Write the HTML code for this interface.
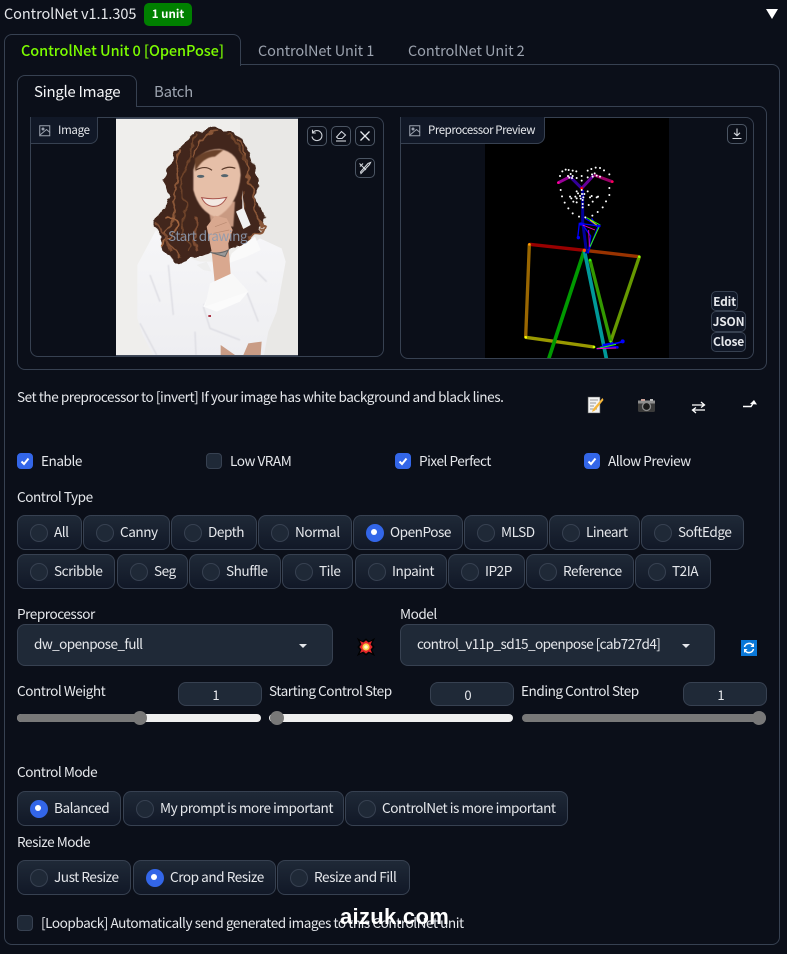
<!DOCTYPE html>
<html><head><meta charset="utf-8"><style>
*{box-sizing:border-box}
html,body{margin:0;padding:0;background:#0b0f19}
body{width:787px;height:954px;position:relative;overflow:hidden;font-family:"Noto Sans CJK JP","Liberation Sans",sans-serif;font-size:13.6px;color:#e5e7eb}
.a{position:absolute;white-space:nowrap}
.b{position:absolute;border:1px solid #374151}
.t{position:absolute;white-space:nowrap;line-height:20px;height:20px;letter-spacing:-.47px;margin-top:-1px}
.r{position:absolute;height:35px;border:1px solid #374151;border-radius:8px;background:linear-gradient(to bottom,#1f2937,#111827);line-height:31px;white-space:nowrap;padding-left:36px;color:#e5e7eb;letter-spacing:-.47px}
.r:before{content:"";position:absolute;left:12px;top:8px;width:16px;height:16px;border-radius:50%;background:#1f2937;border:1px solid #374151}
.r.on:before{background:#3366e8;border-color:#3366e8}
.r.on:after{content:"";position:absolute;left:17px;top:13px;width:6px;height:6px;border-radius:50%;background:#fff}
.c{position:absolute;width:16px;height:16px;border-radius:4px;background:#1f2937;border:1px solid #374151}
.c.on{background:#3366e8;border-color:#3366e8}
.c.on svg{position:absolute;left:1px;top:1px}
.ib{position:absolute;width:20px;height:20px;border:1px solid #4b5563;border-radius:5px;background:#0b0f19}
.ib svg{position:absolute;left:2px;top:2px}
.sb{position:absolute;border:1px solid #374151;border-radius:5px;background:#111827;color:#e5e7eb;font-weight:700;font-size:12px;text-align:center;line-height:18px;height:20px;letter-spacing:-.2px}
.sel{position:absolute;height:42px;top:624px;background:#1f2937;border:1px solid #374151;border-radius:8px;line-height:37px;padding-left:16px;letter-spacing:-.6px}
.ar{position:absolute;width:0;height:0;border-left:4px solid transparent;border-right:4px solid transparent;border-top:4px solid #e5e7eb;top:19px}
.num{position:absolute;top:682px;width:84px;height:24px;background:#1f2937;border:1px solid #374151;border-radius:8px;text-align:center;line-height:24px;font-size:13px;padding-right:8px}
.tr{position:absolute;top:714px;height:8px;border-radius:4px;background:#f0f0f0}
.fi{position:absolute;top:714px;height:8px;border-radius:4px;background:#787878}
.kn{position:absolute;top:711px;width:14px;height:14px;border-radius:50%;background:#787878}
</style></head><body>

<div class="t" style="left:4px;top:5px;font-size:14.5px;letter-spacing:-.07px">ControlNet v1.1.305</div>
<div class="a" style="left:144px;top:3px;width:48px;height:23px;background:#008000;border-radius:5px;color:#fff;font-weight:700;font-size:11.5px;text-align:center;line-height:23px">1 unit</div>
<svg class="a" style="left:765px;top:8px" width="14" height="12"><path d="M1 1H13L7 11Z" fill="#fff"/></svg>

<!-- outer panel -->
<div class="b" style="left:4px;top:64px;width:776px;height:881px;border-radius:0 8px 8px 8px"></div>
<div class="a" style="left:4px;top:34px;width:237px;height:32px;border:1px solid #374151;border-bottom:0;border-radius:8px 8px 0 0;background:#0b0f19"></div>
<div class="t" style="left:21px;top:42px;color:#7cfc00;font-weight:500;font-size:14.5px;letter-spacing:-.07px">ControlNet Unit 0 [OpenPose]</div>
<div class="t" style="left:258px;top:42px;color:#9ca3af;font-size:14.5px;letter-spacing:-.1px">ControlNet Unit 1</div>
<div class="t" style="left:408px;top:42px;color:#9ca3af;font-size:14.5px;letter-spacing:-.07px">ControlNet Unit 2</div>

<!-- inner panel -->
<div class="b" style="left:17px;top:106px;width:750px;height:264px;border-radius:0 8px 8px 8px"></div>
<div class="a" style="left:17px;top:75px;width:120px;height:32px;border:1px solid #374151;border-bottom:0;border-radius:8px 8px 0 0;background:#0b0f19"></div>
<div class="t" style="left:34px;top:83px;font-size:15px;letter-spacing:-.3px;color:#f3f4f6">Single Image</div>
<div class="t" style="left:154px;top:83px;font-size:15px;letter-spacing:-.25px;color:#9ca3af">Batch</div>

<!-- image box -->
<div class="b" style="left:30px;top:117px;width:354px;height:240px;border-radius:8px;overflow:hidden"></div>
<svg class="a" style="left:0;top:0" width="787" height="954" viewBox="0 0 787 954">
<defs>
<filter id="bl" x="-20%" y="-20%" width="140%" height="140%"><feGaussianBlur stdDeviation="1.2"/></filter>
<filter id="bs" x="-20%" y="-20%" width="140%" height="140%"><feGaussianBlur stdDeviation="0.5"/></filter>
<filter id="cu" x="-20%" y="-20%" width="140%" height="140%"><feTurbulence type="fractalNoise" baseFrequency=".035" numOctaves="2" seed="4" result="n"/><feDisplacementMap in="SourceGraphic" in2="n" scale="28" xChannelSelector="R" yChannelSelector="G"/><feGaussianBlur stdDeviation=".5"/></filter>
<clipPath id="pc"><rect x="116" y="119" width="182" height="236"/></clipPath>
<clipPath id="ck"><rect x="485" y="118" width="184" height="240"/></clipPath>
<linearGradient id="sh" x1="0" y1="0" x2="0" y2="1"><stop offset="0" stop-color="#f6f6f8"/><stop offset="1" stop-color="#eeeef1"/></linearGradient>
</defs>
<rect x="116" y="118" width="182" height="238" fill="#414a5a"/>
<g clip-path="url(#pc)"><rect x="116" y="119" width="182" height="236" fill="#efeeec"/>
<rect x="240" y="119" width="58" height="236" fill="#e9e8e6"/>
<g transform="translate(100,115) scale(.33333)">
<!-- shirt -->
<path filter="url(#bs)" d="M168 345L112 450L112 610L128 660L165 730H490L505 650L530 590L557 440L545 400L480 370L440 400L380 440L300 440L210 410Z" fill="url(#sh)"/>
<path filter="url(#bl)" d="M120 625L170 720M285 650L288 720M310 570L440 530M310 575L330 640L420 675M205 450L220 600M440 530L475 620M500 500L470 470M150 480L180 560" stroke="#dcdce2" stroke-width="4" fill="none"/>
<path filter="url(#bs)" d="M310 575L340 510L400 480L445 530L420 560L350 590Z" fill="#fbfbfb"/>
<path d="M362 690L405 720H362Z M445 685L485 680L482 720H430Z" fill="#c99c85" filter="url(#bs)"/>
<!-- hair -->
<g filter="url(#cu)">
<path d="M345 38L405 50L440 90L458 150L475 200L470 250L495 310L478 350L440 372L425 392L330 412L240 445L195 415L178 350L158 315L195 280L205 245L192 190L225 110L280 55Z" fill="#43281b"/>
<g fill="none" stroke-width="6">
<path d="M240 100C215 150 250 180 225 225S250 290 210 330S225 400 240 425" stroke="#8a5637"/>
<path d="M290 60C260 100 270 140 250 180S275 260 250 320S290 380 270 410" stroke="#6d4229"/>
<path d="M350 50C310 60 290 90 275 130" stroke="#8a5637"/>
<path d="M410 70C450 110 430 170 455 210S450 290 480 320S460 360 440 370" stroke="#8a5637"/>
<path d="M380 55C420 80 410 110 440 140" stroke="#6d4229"/>
<path d="M195 310C220 290 240 320 225 350S190 360 190 395" stroke="#a0653f"/>
<path d="M170 320C190 340 200 370 210 410" stroke="#7c4b30"/>
<path d="M430 230C420 270 445 300 430 340" stroke="#6d4229"/>
<path d="M285 300C300 340 270 370 290 400" stroke="#7c4b30"/>
</g></g>
<!-- neck / face -->
<path filter="url(#bl)" d="M322 260L405 260L400 335L335 335Z" fill="#c99a82"/>
<path filter="url(#bl)" d="M280 165Q295 102 358 102Q418 110 422 180Q416 270 350 307Q298 292 280 225Z" fill="#e6bfa8"/>
<path filter="url(#bl)" d="M285 130Q320 100 370 105L345 125Q310 125 285 170Z" fill="#6b432c"/>
<path d="M288 165Q316 150 336 166M365 164Q385 152 406 160" stroke="#5a3a2a" stroke-width="3.500" fill="none"/>
<ellipse cx="302" cy="184" rx="11" ry="4.500" fill="#55656e"/><ellipse cx="374" cy="182" rx="11" ry="4.500" fill="#55656e"/>
<path d="M305 248Q340 255 380 247Q365 276 338 274Q316 272 305 248Z" fill="#f3e9e3" stroke="#a8554d" stroke-width="3"/>
<!-- earring -->
<path d="M427 225L427 280L408 290L430 342L452 330L432 280" fill="#f1f1f1" filter="url(#bs)"/>
<!-- collar -->
<path filter="url(#bs)" d="M420 395L465 365L482 405L440 425L385 445L395 415Z" fill="#fafafa"/>
<path filter="url(#bs)" d="M290 450L320 440L335 470L310 465Z" fill="#eee"/>
<!-- hand + wrist -->
<path filter="url(#bs)" d="M320 335L345 302L380 310L398 345L385 385L392 480L345 512L335 410Z" fill="#d9a88f"/>
<path d="M345 335L380 322M340 355L388 345" stroke="#b98a72" stroke-width="2" fill="none"/>
<path d="M330 412Q360 418 385 405L375 425Z" stroke="#666" stroke-width="3" fill="#999"/>
<path d="M330 505L395 475L445 530L315 575Z" fill="#f8f8f8" filter="url(#bs)"/>
<path d="M325 600h8v6h-8z" fill="#a34"/>
</g></g>

<!-- preview black image -->
<rect x="485" y="118" width="184" height="240" fill="#000"/>
<g clip-path="url(#ck)"><g transform="translate(400,110) scale(.33333)" fill="none" stroke-linecap="butt">
<path d="M388 403L553 421" stroke="#990000" stroke-width="10"/>
<path d="M553 421L718 440" stroke="#993300" stroke-width="10"/>
<path d="M388 403L377 682" stroke="#996600" stroke-width="10"/>
<path d="M377 682L582 711" stroke="#999900" stroke-width="10"/>
<path d="M718 440L632 695" stroke="#669900" stroke-width="10"/>
<path d="M570 450L632 695" stroke="#339900" stroke-width="10"/>
<path d="M553 421L445 750" stroke="#009900" stroke-width="11"/>
<path d="M553 421L620 750" stroke="#009999" stroke-width="11"/>
<path d="M548 240L548 335L560 430" stroke="#000099" stroke-width="9"/>
<path d="M545 235L510 200" stroke="#330099" stroke-width="9"/>
<path d="M510 200L475 218" stroke="#990099" stroke-width="9"/>
<path d="M545 235L582 195" stroke="#660099" stroke-width="9"/>
<path d="M582 195L637 215" stroke="#990066" stroke-width="9"/>
<path d="M555 325L595 348L563 430M545 340L572 378L565 430M575 325L590 350M533 385L538 340L598 348" stroke="#0000ff" stroke-width="4"/>
<path d="M560 323L600 345L570 410" stroke="#33ff00" stroke-width="3"/>
<path d="M548 345L585 360M566 360L568 410" stroke="#ff00cc" stroke-width="2.500"/>
<path d="M570 330L590 345" stroke="#ffcc00" stroke-width="3"/>
<path d="M590 716L650 710M600 712L668 695M610 705L640 698" stroke="#0000ff" stroke-width="5"/>
<path d="M590 716L648 703" stroke="#33ff00" stroke-width="3"/>
<path d="M590 716L650 714" stroke="#ff00cc" stroke-width="3"/>
<circle cx="388" cy="403" r="4" fill="#ff9900"/>
<circle cx="553" cy="421" r="5" fill="#ff5500"/><circle cx="718" cy="440" r="4" fill="#99ff00"/>
<circle cx="377" cy="682" r="4" fill="#ffff00"/><circle cx="582" cy="711" r="4" fill="#ccff00"/><circle cx="570" cy="450" r="4" fill="#33ff00"/><circle cx="632" cy="695" r="3" fill="#66ff00"/>
<circle cx="545" cy="235" r="4" fill="#ff0000"/><circle cx="475" cy="218" r="4" fill="#ff0099"/><circle cx="637" cy="215" r="4" fill="#ff0055"/>
<circle cx="668" cy="694" r="6" fill="#0000ff"/><circle cx="652" cy="712" r="4" fill="#0000ff"/><circle cx="612" cy="705" r="4" fill="#0000ff"/><circle cx="535" cy="383" r="5" fill="#0000ff"/><circle cx="598" cy="348" r="4" fill="#0000ff"/><circle cx="543" cy="342" r="5" fill="#0000ff"/>
<path stroke="#fff" stroke-width="6" stroke-linecap="round" d="M480 198h.1M487 184h.1M497 179h.1M506 180h.1M518 182h.1M529 184h.1M504 198h.1M512 192h.1M518 198h.1M508 203h.1M516 204h.1M530 204h.1M545 198h.1M545 212h.1M563 182h.1M574 177h.1M587 173h.1M600 174h.1M612 181h.1M628 193h.1M563 202h.1M576 193h.1M584 190h.1M590 197h.1M578 200h.1M600 200h.1M482 240h.1M628 234h.1M486 259h.1M628 255h.1M494 278h.1M618 274h.1M505 295h.1M608 292h.1M518 310h.1M593 306h.1M537 320h.1M577 317h.1M556 322h.1M530 244h.1M545 240h.1M563 244h.1M534 250h.1M553 252h.1M510 260h.1M514 265h.1M526 260h.1M530 265h.1M540 258h.1M546 252h.1M550 262h.1M542 266h.1M570 262h.1M575 258h.1M590 262h.1M594 260h.1M520 275h.1M530 277h.1M548 270h.1M548 282h.1M548 292h.1M566 285h.1M578 275h.1"/>
</g></g>

<!-- memo -->
<g transform="translate(587,397)">
<path d="M1 0H13V16H1Z" fill="#f4f4f4" stroke="#555" stroke-width=".6"/>
<path d="M3 3H11M3 6H9M3 9H7M3 12H10" stroke="#9a9a9a" stroke-width="1"/>
<path d="M15.500 1L6 12L5 15L8 13.500L16.500 3Z" fill="#f6b73c"/>
</g>
<!-- camera -->
<g transform="translate(638,398)">
<rect x="0" y="2.500" width="17" height="11.500" rx="1.500" fill="#3a3a3a"/>
<rect x="0" y="2.500" width="17" height="3" fill="#8f8f8f"/>
<rect x="3" y="1" width="4" height="2" fill="#c9a39a"/><rect x="12" y="1" width="3" height="2" fill="#bbb"/>
<circle cx="8.500" cy="8.500" r="4" fill="#1a1a1a" stroke="#8a8a8a" stroke-width="1.300"/>
</g>
<!-- swap -->
<g transform="translate(692,401)" stroke="#fff" stroke-width="1.300" fill="none">
<path d="M0 4H12M9 1L12.500 4L9 6.500"/><path d="M13 9H1M4 6.500L.5 9L4 12"/>
</g>
<!-- return -->
<path d="M743 406.500H751L754 402" stroke="#fff" stroke-width="1.400" fill="none"/>
<path d="M750 404L754 400L757 404.500Z" fill="#fff"/>
<!-- explosion -->
<g transform="translate(366,647)">
<path d="M-8-8L-3.500-5L0-8L3-5L8-8L5.500-3L8 0L5.500 3L8 8L3 5.500L0 8L-3.500 5.500L-8 8L-5.500 3L-8 0L-5.500-3Z" fill="#111" stroke="#000"/>
<path d="M-6-6L-2.500-4.500L0-6.500L2.500-4.500L6-6L4.500-2.500L6.500 0L4.500 2.500L6 6L2.500 4.500L0 6.500L-2.500 4.500L-6 6L-4.500 2.500L-6.500 0L-4.500-2.500Z" fill="#e8262a"/>
<circle r="3.600" fill="#f9d04a"/><circle r="1.800" fill="#fff6d0"/>
</g>
<!-- refresh -->
<g transform="translate(741,640)">
<rect width="16" height="16" fill="#0a78d8"/>
<path d="M3.500 7A4.700 4.700 0 0 1 12 5.500M12.500 9A4.700 4.700 0 0 1 4 10.500" stroke="#fff" stroke-width="1.500" fill="none"/>
<path d="M13 3V7H9.500Z M3 13V9H6.500Z" fill="#fff"/>
</g>
</svg>

<div class="t" style="left:168px;top:226px;color:#8d9bb0;opacity:.9">Start drawing</div>

<div class="a" style="left:30px;top:117px;width:68px;height:27px;background:#111827;border:1px solid #374151;border-top:0;border-radius:0 0 8px 0"></div>
<svg class="a" style="left:39px;top:125px" width="12" height="12" fill="none" stroke="#9ca3af" stroke-width="1"><rect x=".75" y=".75" width="10" height="10"/><circle cx="4" cy="4" r="1" fill="#9ca3af"/><path d="M1 10L7.500 4.500L11 7.500"/></svg>
<div class="t" style="left:58px;top:121px;font-size:11.5px;letter-spacing:-.3px;color:#e5e7eb">Image</div>

<div class="ib" style="left:307px;top:126px"><svg width="14" height="14" fill="none" stroke="#d1d5db" stroke-width="1.100"><path d="M3 3.500A5 5 0 1 1 2 7.500"/><path d="M2.500 .8V4H5.800"/></svg></div>
<div class="ib" style="left:331px;top:126px"><svg width="14" height="14" fill="none" stroke="#d1d5db" stroke-width="1.100"><path d="M2.500 8L7.500 2.500L11.500 6L8 9.500H4Z"/><path d="M2 12H12"/></svg></div>
<div class="ib" style="left:355px;top:126px"><svg width="14" height="14" fill="none" stroke="#e5e7eb" stroke-width="1.300"><path d="M2.500 2.500L11.500 11.500M11.500 2.500L2.500 11.500"/></svg></div>
<div class="ib" style="left:355px;top:158px"><svg width="14" height="14" fill="none" stroke="#d1d5db" stroke-width="1.100"><path d="M3 12.500L11.500 3.500L12.500 1.500L10 2.500L2.500 11Z"/><path d="M1.500 2.500L8 9M2 5.500L5 2.500"/></svg></div>

<!-- preview box -->
<div class="b" style="left:400px;top:117px;width:354px;height:242px;border-radius:8px"></div>
<div class="a" style="left:400px;top:117px;width:145px;height:27px;background:#111827;border:1px solid #374151;border-top:0;border-radius:0 0 8px 0"></div>
<svg class="a" style="left:409px;top:125px" width="12" height="12" fill="none" stroke="#9ca3af" stroke-width="1"><rect x=".75" y=".75" width="10" height="10"/><circle cx="4" cy="4" r="1" fill="#9ca3af"/><path d="M1 10L7.500 4.500L11 7.500"/></svg>
<div class="t" style="left:428px;top:121px;font-size:11.5px;letter-spacing:-.45px;color:#e5e7eb">Preprocessor Preview</div>
<div class="ib" style="left:727px;top:124px"><svg width="14" height="14" fill="none" stroke="#d1d5db" stroke-width="1.100"><path d="M7 1.500V8.500M4 5.800L7 8.700L10 5.800M2.500 11.500H11.500"/></svg></div>
<div class="sb" style="left:711px;top:291px;width:27px;line-height:19px">Edit</div>
<div class="sb" style="left:711px;top:311px;width:35px;height:21px;line-height:19px">JSON</div>
<div class="sb" style="left:711px;top:332px;width:35px;height:20px">Close</div>

<div class="t" style="left:17px;top:387px">Set the preprocessor to [invert] If your image has white background and black lines.</div>

<div class="c on" style="left:17px;top:453px"><svg width="12" height="12" fill="none" stroke="#fff" stroke-width="2"><path d="M2.500 6.500L5 9L9.500 3.500"/></svg></div><div class="t" style="left:41px;top:451px">Enable</div>
<div class="c" style="left:206px;top:453px"></div><div class="t" style="left:230px;top:451px">Low VRAM</div>
<div class="c on" style="left:395px;top:453px"><svg width="12" height="12" fill="none" stroke="#fff" stroke-width="2"><path d="M2.500 6.500L5 9L9.500 3.500"/></svg></div><div class="t" style="left:419px;top:451px">Pixel Perfect</div>
<div class="c on" style="left:584px;top:453px"><svg width="12" height="12" fill="none" stroke="#fff" stroke-width="2"><path d="M2.500 6.500L5 9L9.500 3.500"/></svg></div><div class="t" style="left:608px;top:451px">Allow Preview</div>

<div class="t" style="left:17px;top:487px">Control Type</div>
<div class="r" style="left:17px;top:515px;width:65px">All</div>
<div class="r" style="left:83px;top:515px;width:87px">Canny</div>
<div class="r" style="left:171px;top:515px;width:86px">Depth</div>
<div class="r" style="left:258px;top:515px;width:94px">Normal</div>
<div class="r on" style="left:353px;top:515px;width:110px">OpenPose</div>
<div class="r" style="left:464px;top:515px;width:84px">MLSD</div>
<div class="r" style="left:549px;top:515px;width:91px">Lineart</div>
<div class="r" style="left:641px;top:515px;width:103px">SoftEdge</div>
<div class="r" style="left:17px;top:554px;width:98px">Scribble</div>
<div class="r" style="left:117px;top:554px;width:71px">Seg</div>
<div class="r" style="left:189px;top:554px;width:92px">Shuffle</div>
<div class="r" style="left:282px;top:554px;width:71px">Tile</div>
<div class="r" style="left:355px;top:554px;width:92px">Inpaint</div>
<div class="r" style="left:448px;top:554px;width:77px">IP2P</div>
<div class="r" style="left:526px;top:554px;width:108px">Reference</div>
<div class="r" style="left:635px;top:554px;width:76px">T2IA</div>

<div class="t" style="left:17px;top:604px">Preprocessor</div>
<div class="sel" style="left:17px;width:316px">dw_openpose_full<i class="ar" style="left:281px"></i></div>
<div class="t" style="left:400px;top:604px">Model</div>
<div class="sel" style="left:400px;width:315px">control_v11p_sd15_openpose [cab727d4]<i class="ar" style="left:281px"></i></div>

<div class="t" style="left:17px;top:681px">Control Weight</div>
<div class="num" style="left:178px">1</div>
<div class="t" style="left:269px;top:681px">Starting Control Step</div>
<div class="num" style="left:430px">0</div>
<div class="t" style="left:521px;top:681px">Ending Control Step</div>
<div class="num" style="left:683px">1</div>

<div class="tr" style="left:17px;width:244px"></div><div class="fi" style="left:17px;width:123px"></div><div class="kn" style="left:133px"></div>
<div class="tr" style="left:269px;width:244px"></div><div class="kn" style="left:270px"></div>
<div class="fi" style="left:522px;width:244px"></div><div class="kn" style="left:752px"></div>

<div class="t" style="left:17px;top:762px">Control Mode</div>
<div class="r on" style="left:17px;top:791px;width:104px">Balanced</div>
<div class="r" style="left:123px;top:791px;width:221px">My prompt is more important</div>
<div class="r" style="left:345px;top:791px;width:223px">ControlNet is more important</div>
<div class="t" style="left:17px;top:832px">Resize Mode</div>
<div class="r" style="left:17px;top:860px;width:114px">Just Resize</div>
<div class="r on" style="left:133px;top:860px;width:143px">Crop and Resize</div>
<div class="r" style="left:277px;top:860px;width:133px">Resize and Fill</div>

<div class="c" style="left:17px;top:915px"></div>
<div class="t" style="left:41px;top:913px">[Loopback] Automatically send generated images to this ControlNet unit</div>
<div class="a" style="left:340px;top:903px;font-family:'Liberation Sans',sans-serif;font-weight:700;font-size:22px;line-height:28px;color:#fff;letter-spacing:.3px">aizuk.com</div>
</body></html>
